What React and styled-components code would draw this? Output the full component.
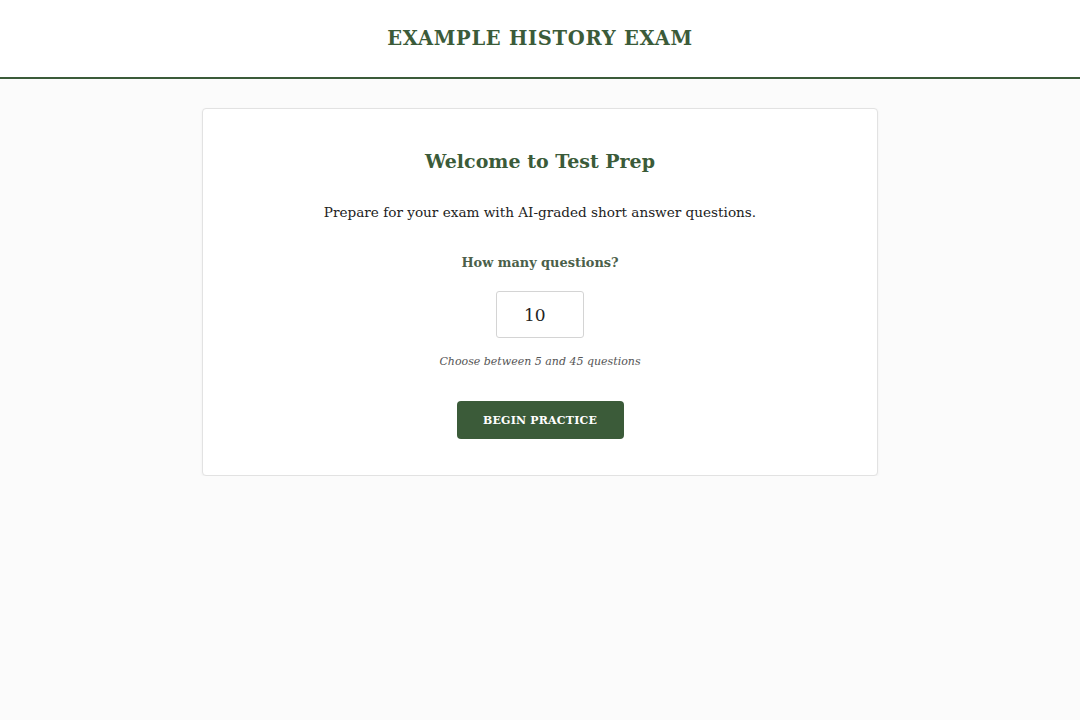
import React, { useState } from 'react'
import styled, { createGlobalStyle } from 'styled-components'

const GlobalStyle = createGlobalStyle`
  html, body {
    margin: 0;
    padding: 0;
    background: #fbfbfb;
    font-family: "DejaVu Serif", "Liberation Serif", serif;
  }
`

const Header = styled.header`
  height: 77px;
  background: #fff;
  border-bottom: 2px solid #3b5b39;
  display: flex;
  align-items: center;
  justify-content: center;
  h1 {
    margin: 0;
    font-size: 19.5px;
    font-weight: bold;
    letter-spacing: 0.7px;
    color: #3b5b39;
  }
`

const Main = styled.main`
  display: flex;
  justify-content: center;
  padding-top: 29px;
`

const Card = styled.div`
  width: 676px;
  box-sizing: border-box;
  background: #fff;
  border: 1px solid #e2e2e2;
  border-radius: 4px;
  box-shadow: 0 1px 3px rgba(0, 0, 0, 0.05);
  padding: 38px 40px 36px;
  display: flex;
  flex-direction: column;
  align-items: center;
  text-align: center;
`

const Title = styled.h2`
  margin: 0;
  font-size: 19px;
  line-height: 28px;
  font-weight: bold;
  color: #3b5b39;
`

const Intro = styled.p`
  margin: 26px 0 0;
  font-size: 13.6px;
  line-height: 22px;
  color: #222;
`

const Label = styled.label`
  margin-top: 30px;
  font-size: 12.9px;
  line-height: 20px;
  font-weight: bold;
  color: #4b5f4a;
`

const CountInput = styled.input`
  margin-top: 18px;
  width: 88px;
  height: 47px;
  box-sizing: border-box;
  border: 1px solid #d4d4d4;
  border-radius: 3px;
  padding: 0 0 0 27px;
  font-family: inherit;
  font-size: 17px;
  color: #222;
  text-align: left;
  outline: none;
`

const Hint = styled.p`
  margin: 15px 0 0;
  font-size: 11px;
  line-height: 18px;
  font-style: italic;
  color: #555;
`

const StartButton = styled.button`
  margin-top: 30px;
  width: 167px;
  height: 38px;
  background: #3b5b39;
  color: #fff;
  border: none;
  border-radius: 4px;
  font-family: inherit;
  font-size: 11px;
  font-weight: bold;
  letter-spacing: 0.2px;
  text-transform: uppercase;
  cursor: pointer;
`

export default function App() {
  const [count, setCount] = useState('10')

  return (
    <>
      <GlobalStyle />
      <Header>
        <h1>EXAMPLE HISTORY EXAM</h1>
      </Header>
      <Main>
        <Card>
          <Title>Welcome to Test Prep</Title>
          <Intro>Prepare for your exam with AI-graded short answer questions.</Intro>
          <Label htmlFor="count">How many questions?</Label>
          <CountInput id="count" value={count} onChange={e => setCount(e.target.value)} />
          <Hint>Choose between 5 and 45 questions</Hint>
          <StartButton>Begin Practice</StartButton>
        </Card>
      </Main>
    </>
  )
}
